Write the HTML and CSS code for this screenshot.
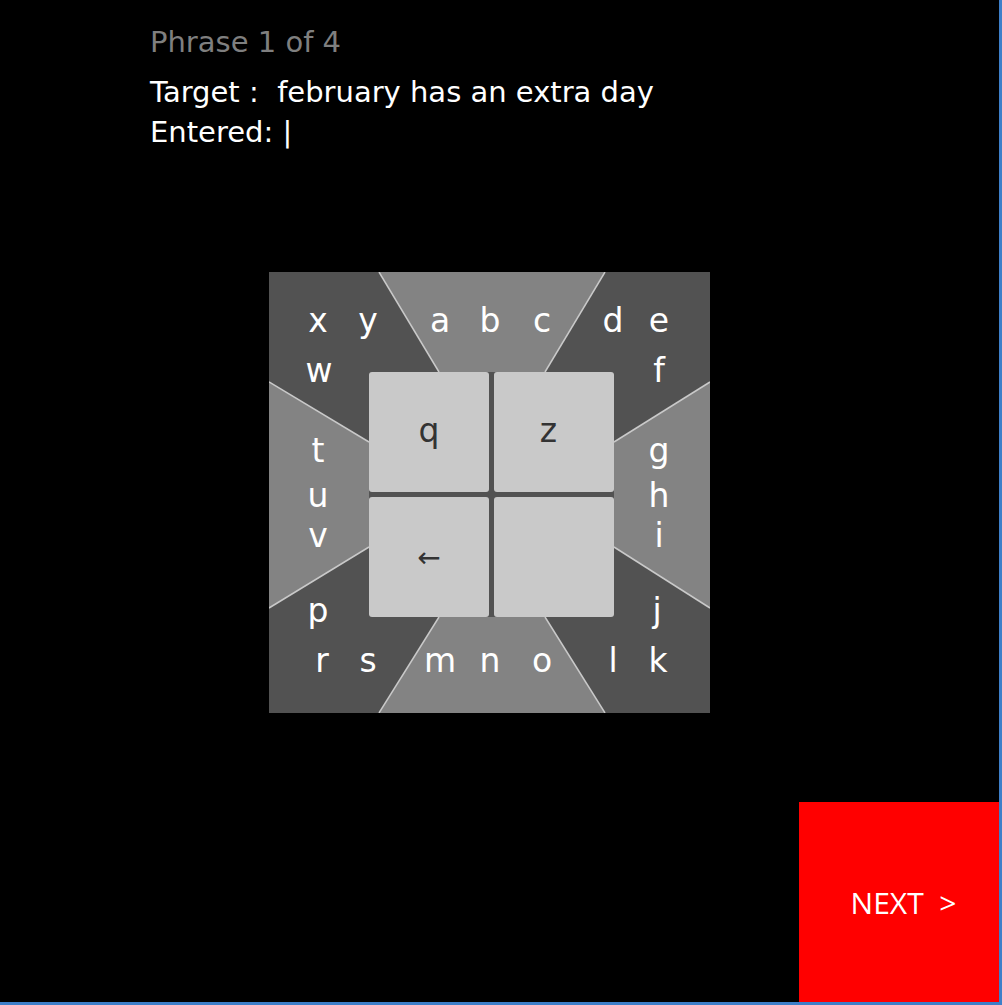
FILE: index.html
```html
<!DOCTYPE html>
<html>
<head>
<meta charset="utf-8">
<link rel="stylesheet" href="styles.css">
</head>
<body>
<div class="screen">
  <div class="header">
    <div class="line phrase">Phrase 1 of 4</div>
    <div class="line">Target :&nbsp; february has an extra day</div>
    <div class="line">Entered: |</div>
  </div>
  <div class="keyboard">
    <svg class="kb-bg" width="441" height="441" viewBox="0 0 441 441">
      <rect x="0" y="0" width="441" height="441" fill="#525252"/>
      <polygon points="110,0 336,0 270,110 176,110" fill="#838383"/>
      <polygon points="110,441 336,441 270,335 176,335" fill="#838383"/>
      <polygon points="0,110 0,336 110,269 110,176" fill="#838383"/>
      <polygon points="441,110 441,336 335,269 335,176" fill="#838383"/>
      <g stroke="#c9c9c9" stroke-width="1.5">
        <line x1="110" y1="0" x2="170" y2="100"/>
        <line x1="336" y1="0" x2="276" y2="100"/>
        <line x1="110" y1="441" x2="170" y2="345"/>
        <line x1="336" y1="441" x2="276" y2="345"/>
        <line x1="0" y1="110" x2="100" y2="170"/>
        <line x1="0" y1="336" x2="100" y2="275"/>
        <line x1="441" y1="110" x2="345" y2="170"/>
        <line x1="441" y1="336" x2="345" y2="275"/>
      </g>
      <g class="letters" fill="#ffffff" text-anchor="middle">
        <text x="49" y="60">x</text>
        <text x="99" y="60">y</text>
        <text x="171" y="60">a</text>
        <text x="221" y="60">b</text>
        <text x="273" y="60">c</text>
        <text x="344" y="60">d</text>
        <text x="390" y="60">e</text>
        <text x="50" y="110">w</text>
        <text x="390" y="110">f</text>
        <text x="49" y="190">t</text>
        <text x="49" y="235">u</text>
        <text x="49" y="275">v</text>
        <text x="390" y="190">g</text>
        <text x="390" y="235">h</text>
        <text x="390" y="275">i</text>
        <text x="49" y="350">p</text>
        <text x="388" y="350">j</text>
        <text x="53" y="400">r</text>
        <text x="99" y="400">s</text>
        <text x="171" y="400">m</text>
        <text x="221" y="400">n</text>
        <text x="273" y="400">o</text>
        <text x="344" y="400">l</text>
        <text x="389" y="400">k</text>
      </g>
    </svg>
    <div class="keys">
      <div class="key">q</div>
      <div class="key key-z">z</div>
      <div class="key arrow">←</div>
      <div class="key"></div>
    </div>
  </div>
  <div class="next">NEXT&nbsp; &gt;</div>
</div>
</body>
</html>
```

FILE: styles.css
```css
html, body {
  margin: 0;
  padding: 0;
  background: #000;
}
.screen {
  width: 999px;
  height: 1002px;
  background: #000;
  border-right: 3px solid #3d7fc9;
  border-bottom: 3px solid #3d7fc9;
  display: flex;
  flex-direction: column;
}
.header {
  padding: 22px 0 0 150px;
  font-family: "DejaVu Sans", sans-serif;
  font-size: 29px;
  color: #ffffff;
}
.line {
  height: 40px;
  line-height: 40px;
  white-space: nowrap;
}
.phrase {
  color: #7f7f7f;
  margin-bottom: 10px;
}
.keyboard {
  position: relative;
  width: 441px;
  height: 441px;
  margin: 120px 0 0 269px;
}
.kb-bg {
  display: block;
}
.letters {
  font-family: "DejaVu Sans", sans-serif;
  font-size: 33px;
}
.keys {
  position: absolute;
  left: 100px;
  top: 100px;
  width: 245px;
  height: 245px;
  background: #525252;
  display: grid;
  grid-template-columns: 120px 120px;
  grid-template-rows: 120px 120px;
  gap: 5px;
}
.key {
  background: #c9c9c9;
  border-radius: 3px;
  display: flex;
  align-items: center;
  justify-content: center;
  font-family: "DejaVu Sans", sans-serif;
  font-size: 33px;
  color: #333333;
  padding-bottom: 3px;
  box-sizing: border-box;
}
.key-z {
  padding-right: 11px;
}
.key.arrow {
  font-size: 28px;
  padding-bottom: 0;
}
.next {
  margin-top: auto;
  align-self: flex-end;
  width: 200px;
  height: 200px;
  background: #ff0000;
  color: #ffffff;
  font-family: "Open Sans", sans-serif;
  font-size: 30px;
  display: flex;
  align-items: center;
  justify-content: center;
  padding-left: 9px;
  box-sizing: border-box;
}
```
